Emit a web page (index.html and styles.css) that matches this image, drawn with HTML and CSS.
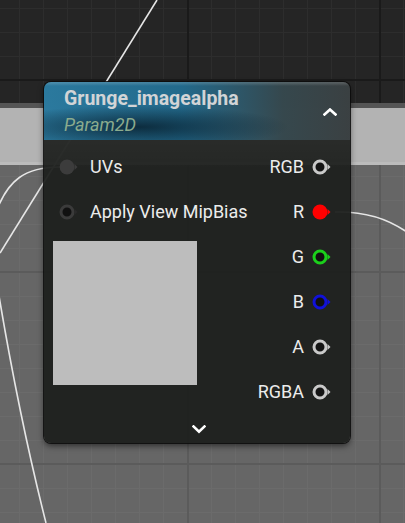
FILE: index.html
```html
<!DOCTYPE html>
<html>
<head>
<meta charset="utf-8">
<link rel="stylesheet" href="styles.css">
</head>
<body>
<div class="canvas">
  <div class="bg-top"></div>
  <div class="bg-strip"></div>
  <div class="bg-light"></div>
  <div class="bg-edge"></div>
  <div class="bg-bottom"></div>

  <svg class="wires" width="405" height="523" viewBox="0 0 405 523">
    <path d="M157 0 L0 253" />
    <path d="M60 167 C25 167 8 180 -4 212" />
    <path d="M-2 290 C8 350 25 440 46 523" />
    <path d="M335 212 C368 211 392 220 412 236" />
  </svg>

  <div class="node">
    <div class="node-header">
      <div class="titles">
        <div class="title">Grunge_imagealpha</div>
        <div class="subtitle">Param2D</div>
      </div>
      <svg class="caret" width="14" height="8" viewBox="0 0 14 8"><path d="M1.5 6.5 L7 1.5 L12.5 6.5"/></svg>
    </div>
    <div class="node-body">
      <div class="col-in">
        <div class="row">
          <svg class="pin" width="22" height="16" viewBox="0 0 22 16"><circle cx="8" cy="8" r="7.4" class="fill-dim"/><path d="M15.5 5 L18.5 8 L15.5 11 Z" class="fill-dim"/></svg>
          <span class="label">UVs</span>
        </div>
        <div class="row">
          <svg class="pin" width="22" height="16" viewBox="0 0 22 16"><circle cx="8" cy="8" r="6" class="ring-dim"/><path d="M15.5 5 L18.5 8 L15.5 11 Z" class="fill-dark"/></svg>
          <span class="label">Apply View MipBias</span>
        </div>
        <div class="preview"></div>
      </div>
      <div class="col-out">
        <div class="row out">
          <span class="label">RGB</span>
          <svg class="pin" width="22" height="16" viewBox="0 0 22 16"><circle cx="8" cy="8" r="6" class="ring-grey"/><path d="M15.5 5 L18.5 8 L15.5 11 Z" class="fill-grey"/></svg>
        </div>
        <div class="row out">
          <span class="label">R</span>
          <svg class="pin" width="22" height="16" viewBox="0 0 22 16"><circle cx="8" cy="8" r="7.5" class="fill-red"/><path d="M15.5 5 L18.5 8 L15.5 11 Z" class="fill-red"/></svg>
        </div>
        <div class="row out">
          <span class="label">G</span>
          <svg class="pin" width="22" height="16" viewBox="0 0 22 16"><circle cx="8" cy="8" r="6" class="ring-green"/><path d="M15.5 5 L18.5 8 L15.5 11 Z" class="fill-green"/></svg>
        </div>
        <div class="row out">
          <span class="label">B</span>
          <svg class="pin" width="22" height="16" viewBox="0 0 22 16"><circle cx="8" cy="8" r="6" class="ring-blue"/><path d="M15.5 5 L18.5 8 L15.5 11 Z" class="fill-blue"/></svg>
        </div>
        <div class="row out">
          <span class="label">A</span>
          <svg class="pin" width="22" height="16" viewBox="0 0 22 16"><circle cx="8" cy="8" r="6" class="ring-grey"/><path d="M15.5 5 L18.5 8 L15.5 11 Z" class="fill-grey"/></svg>
        </div>
        <div class="row out">
          <span class="label">RGBA</span>
          <svg class="pin" width="22" height="16" viewBox="0 0 22 16"><circle cx="8" cy="8" r="6" class="ring-grey"/><path d="M15.5 5 L18.5 8 L15.5 11 Z" class="fill-grey"/></svg>
        </div>
      </div>
    </div>
    <div class="node-footer">
      <svg class="chevron" width="14" height="9" viewBox="0 0 14 9"><path d="M1.5 1.5 L7 6.8 L12.5 1.5"/></svg>
    </div>
  </div>
</div>
</body>
</html>
```
FILE: styles.css
```css
html, body {
  margin: 0;
  padding: 0;
  background: #252525;
}

.canvas {
  position: relative;
  width: 405px;
  height: 523px;
  overflow: hidden;
  display: flex;
  flex-direction: column;
  font-family: Roboto, "Noto Sans", sans-serif;
}

.bg-top {
  height: 103px;
  background-color: #252525;
  background-image:
    linear-gradient(to right, #1a1a1a 0 2px, transparent 2px),
    linear-gradient(to bottom, #1a1a1a 0 2px, transparent 2px),
    linear-gradient(to right, #2d2d2d 0 1px, transparent 1px),
    linear-gradient(to bottom, #2d2d2d 0 1px, transparent 1px);
  background-size: 192px 100%, 100% 192px, 24px 100%, 100% 24px;
  background-position: 187px 0, 0 79px, 19px 0, 0 8px;
}

.bg-strip {
  height: 5px;
  background: #555555;
}

.bg-light {
  height: 54px;
  background: #b3b3b3;
}

.bg-edge {
  height: 3px;
  background: #bcbcbc;
}

.bg-bottom {
  flex: 1;
  background-color: #666666;
  background-image:
    linear-gradient(to right, #5b5b5b 0 2px, transparent 2px),
    linear-gradient(to bottom, #5b5b5b 0 2px, transparent 2px),
    linear-gradient(to right, #6b6b6b 0 1px, transparent 1px),
    linear-gradient(to bottom, #6b6b6b 0 1px, transparent 1px);
  background-size: 192px 100%, 100% 192px, 24px 100%, 100% 24px;
  background-position: 187px 0, 0 106px, 19px 0, 0 11px;
}

.wires {
  position: absolute;
  left: 0;
  top: 0;
}

.wires path {
  fill: none;
  stroke: #e6e6e6;
  stroke-width: 1.6;
}

.node {
  position: absolute;
  left: 44px;
  top: 82px;
  width: 306px;
  height: 361px;
  border-radius: 7px;
  display: flex;
  flex-direction: column;
  overflow: hidden;
  background: rgba(30, 32, 30, 0.95);
  box-shadow: 0 0 0 1px rgba(10, 10, 10, 0.85), 0 3px 6px rgba(0, 0, 0, 0.55);
}

.node-header {
  height: 58px;
  flex: none;
  display: flex;
  align-items: center;
  justify-content: space-between;
  padding: 0 13px 0 20px;
  box-sizing: border-box;
  background:
    radial-gradient(ellipse 150px 22px at 95px 45px, rgba(6, 28, 42, 0.8), rgba(6, 28, 42, 0)),
    linear-gradient(to bottom, rgba(255, 255, 255, 0.14) 0 1px, rgba(255, 255, 255, 0) 4px),
    linear-gradient(to right, rgba(44, 127, 166, 0.94) 0%, rgba(35, 110, 146, 0.94) 45%, rgba(55, 74, 80, 0.94) 78%, rgba(60, 66, 68, 0.94) 100%);
}

.titles {
  display: flex;
  flex-direction: column;
  margin-top: 1px;
}

.title {
  font-size: 19.5px;
  font-weight: 700;
  color: #d2d4d6;
  line-height: 24px;
}

.subtitle {
  font-size: 18px;
  font-style: italic;
  color: #8bab8e;
  line-height: 24px;
  margin-top: 2px;
}

.caret {
  margin-top: 2px;
}

.caret path, .chevron path {
  fill: none;
  stroke: #ffffff;
  stroke-width: 2.6;
  stroke-linecap: square;
}

.node-body {
  flex: 1;
  display: flex;
  justify-content: space-between;
  padding-top: 4px;
  background: linear-gradient(to bottom, rgba(255, 255, 255, 0.02), rgba(255, 255, 255, 0) 30px);
}

.col-in {
  display: flex;
  flex-direction: column;
}

.col-out {
  display: flex;
  flex-direction: column;
  align-items: flex-end;
  padding-right: 16px;
}

.row {
  height: 45px;
  display: flex;
  align-items: center;
}

.col-in .row {
  padding-left: 15px;
  gap: 9px;
}

.row.out {
  gap: 8px;
}

.pin {
  display: block;
  flex: none;
}

.label {
  font-size: 18px;
  color: #ececec;
  line-height: 20px;
}

.preview {
  margin: 7px 0 0 9px;
  width: 144px;
  height: 144px;
  background: #bdbdbd;
}

.fill-dim { fill: #3c3c3c; }
.fill-dark { fill: #2a2a2a; }
.ring-dim { fill: #111111; stroke: #3b3b3b; stroke-width: 3; }
.ring-grey { fill: #141414; stroke: #c9c9c9; stroke-width: 3; }
.fill-grey { fill: #c9c9c9; }
.fill-red { fill: #ff0000; }
.ring-green { fill: #111111; stroke: #1bd01b; stroke-width: 3; }
.fill-green { fill: #1bd01b; }
.ring-blue { fill: #111111; stroke: #1111d8; stroke-width: 3; }
.fill-blue { fill: #1111d8; }

.node-footer {
  height: 30px;
  flex: none;
  display: flex;
  justify-content: center;
  align-items: center;
}

.chevron {
  margin-left: 3px;
  margin-top: 1px;
}
```
